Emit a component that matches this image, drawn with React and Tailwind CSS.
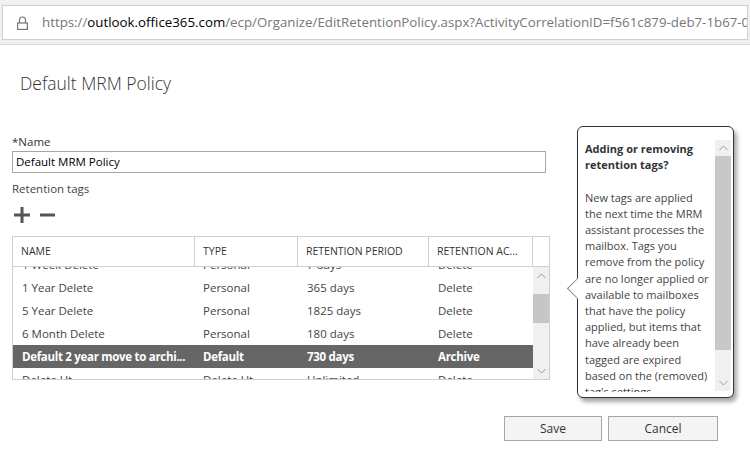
import React from 'react';

const rows = [
  { name: '1 Week Delete', type: 'Personal', period: '7 days', action: 'Delete' },
  { name: '1 Year Delete', type: 'Personal', period: '365 days', action: 'Delete' },
  { name: '5 Year Delete', type: 'Personal', period: '1825 days', action: 'Delete' },
  { name: '6 Month Delete', type: 'Personal', period: '180 days', action: 'Delete' },
  { name: 'Default 2 year move to archi...', type: 'Default', period: '730 days', action: 'Archive', selected: true },
  { name: 'Delete Ut...', type: 'Delete Ut...', period: 'Unlimited', action: 'Delete' },
];

const helpLines = [
  'New tags are applied',
  'the next time the MRM',
  'assistant processes the',
  'mailbox. Tags you',
  'remove from the policy',
  'are no longer applied or',
  'available to mailboxes',
  'that have the policy',
  'applied, but items that',
  'have already been',
  'tagged are expired',
  'based on the (removed)',
  "tag's settings",
];

function Chevron({ up }) {
  return (
    <svg width="9" height="6" viewBox="0 0 9 6" className="block">
      <polyline
        points={up ? '0.5,5 4.5,1 8.5,5' : '0.5,1 4.5,5 8.5,1'}
        fill="none"
        stroke="#9a9a9a"
        strokeWidth="1"
      />
    </svg>
  );
}

function LockIcon() {
  return (
    <svg width="11" height="14" viewBox="0 0 11 14" className="block shrink-0">
      <path d="M2.5 7V4a3 3 0 0 1 6 0v3" fill="none" stroke="#777" strokeWidth="1.2" />
      <rect x="0.6" y="7" width="9.8" height="6.4" fill="none" stroke="#777" strokeWidth="1.2" />
    </svg>
  );
}

export default function App() {
  return (
    <div className="w-[750px] h-[474px] bg-white overflow-hidden relative font-['Open_Sans',sans-serif] text-[#333]">
      {/* Address bar */}
      <div className="h-[45px] bg-[#f0f0f0] border-b border-[#d9d9d9] px-[2px] pt-[5px]">
        <div className="h-[35px] bg-white border border-[#cfcfcf] flex items-center pl-[14px] gap-[14px] overflow-hidden">
          <LockIcon />
          <div className="whitespace-nowrap text-[13.3px] text-[#777]">
            https://<span className="text-black">outlook.office365.com</span>/ecp/Organize/EditRetentionPolicy.aspx?ActivityCorrelationID=f561c879-deb7-1b67-08c2-3c3
          </div>
        </div>
      </div>

      {/* Form */}
      <div className="px-[12px]">
        <h1 className="mt-[25px] ml-[8px] text-[17.5px] font-light leading-[26px] text-[#333]">Default MRM Policy</h1>

        <div className="mt-[38px] text-[11.5px] leading-[15px]">*Name</div>
        <div className="mt-[2px] w-[534px] h-[22px] border border-[#a6a6a6] flex items-center px-[3px] text-[11.5px] text-black">
          Default MRM Policy
        </div>

        <div className="mt-[7px] text-[11.5px] leading-[17px] text-[#444]">Retention tags</div>

        <div className="mt-[10px] flex items-center gap-[10px] h-[16px]">
          <svg width="16" height="16" viewBox="0 0 16 16" className="block ml-[2px]">
            <rect x="0" y="6.5" width="16" height="3" fill="#555" />
            <rect x="6.5" y="0" width="3" height="16" fill="#555" />
          </svg>
          <svg width="15" height="16" viewBox="0 0 15 16" className="block">
            <rect x="0" y="6.5" width="15" height="3" fill="#555" />
          </svg>
        </div>

        {/* Table */}
        <div className="mt-[13px] w-[538px] h-[144px] border border-[#cfcfcf] flex flex-col text-[11.5px]">
          <div className="h-[30px] flex border-b border-[#cfcfcf] text-[10.5px] uppercase text-[#333] shrink-0">
            <div className="w-[182px] border-r border-[#cfcfcf] pl-[8px] flex items-center">Name</div>
            <div className="w-[103px] border-r border-[#cfcfcf] pl-[8px] flex items-center">Type</div>
            <div className="w-[131px] border-r border-[#cfcfcf] pl-[8px] flex items-center">Retention Period</div>
            <div className="w-[104px] border-r border-[#cfcfcf] pl-[8px] flex items-center">Retention Ac...</div>
            <div className="flex-1" />
          </div>
          <div className="flex-1 flex overflow-hidden">
            <div className="w-[520px] overflow-hidden">
              <div className="-mt-[14px]">
                {rows.map((r) => (
                  <div
                    key={r.name}
                    className={`h-[23px] flex items-center ${r.selected ? 'bg-[#666] text-white font-bold tracking-[-0.3px]' : 'text-[#444]'}`}
                  >
                    <div className="w-[182px] pl-[9px] whitespace-nowrap overflow-hidden">{r.name}</div>
                    <div className="w-[104px] pl-[8px] whitespace-nowrap">{r.type}</div>
                    <div className="w-[131px] pl-[8px] whitespace-nowrap">{r.period}</div>
                    <div className="w-[103px] pl-[8px] whitespace-nowrap">{r.action}</div>
                  </div>
                ))}
              </div>
            </div>
            <div className="flex-1 bg-[#f0f0f0] flex flex-col">
              <div className="h-[17px] flex items-center justify-center">
                <Chevron up />
              </div>
              <div className="mt-[10px] h-[29px] bg-[#c6c6c6]" />
              <div className="flex-1" />
              <div className="h-[17px] flex items-center justify-center">
                <Chevron />
              </div>
            </div>
          </div>
        </div>

        {/* Buttons */}
        <div className="mt-[36px] w-[706px] flex justify-end gap-[6px] text-[12px]">
          <button className="w-[98px] h-[25px] bg-[#f4f4f4] border border-[#a6a6a6] text-[#333]">Save</button>
          <button className="w-[110px] h-[25px] bg-[#f4f4f4] border border-[#a6a6a6] text-[#333]">Cancel</button>
        </div>
      </div>

      {/* Help callout */}
      <div className="absolute left-[577px] top-[126px] w-[157px] h-[272px] bg-white border border-[#333] rounded-[6px] shadow-[3px_4px_4px_rgba(0,0,0,0.35)]">
        <div className="absolute left-[-8px] top-[154px] w-[15px] h-[15px] bg-white border-l border-b border-[#8a8a8a] rotate-45" />
        <div className="absolute inset-0 rounded-[6px] flex overflow-hidden">
          <div className="w-[137px] pl-[7px] pt-[14px] text-[11px] leading-[16.2px] text-[#444] overflow-hidden h-[265px]">
            <div className="font-bold text-[#333]">Adding or removing</div>
            <div className="font-bold text-[#333]">retention tags?</div>
            <div className="h-[16.2px]" />
            {helpLines.map((l) => (
              <div key={l} className="whitespace-nowrap">{l}</div>
            ))}
          </div>
          <div className="mt-[13px] w-[16px] h-[251px] bg-[#f0f0f0] flex flex-col">
            <div className="h-[16px] flex items-center justify-center">
              <Chevron up />
            </div>
            <div className="h-[194px] bg-[#c8c8c8]" />
            <div className="flex-1 flex items-end justify-center pb-[5px]">
              <Chevron />
            </div>
          </div>
        </div>
      </div>
    </div>
  );
}
